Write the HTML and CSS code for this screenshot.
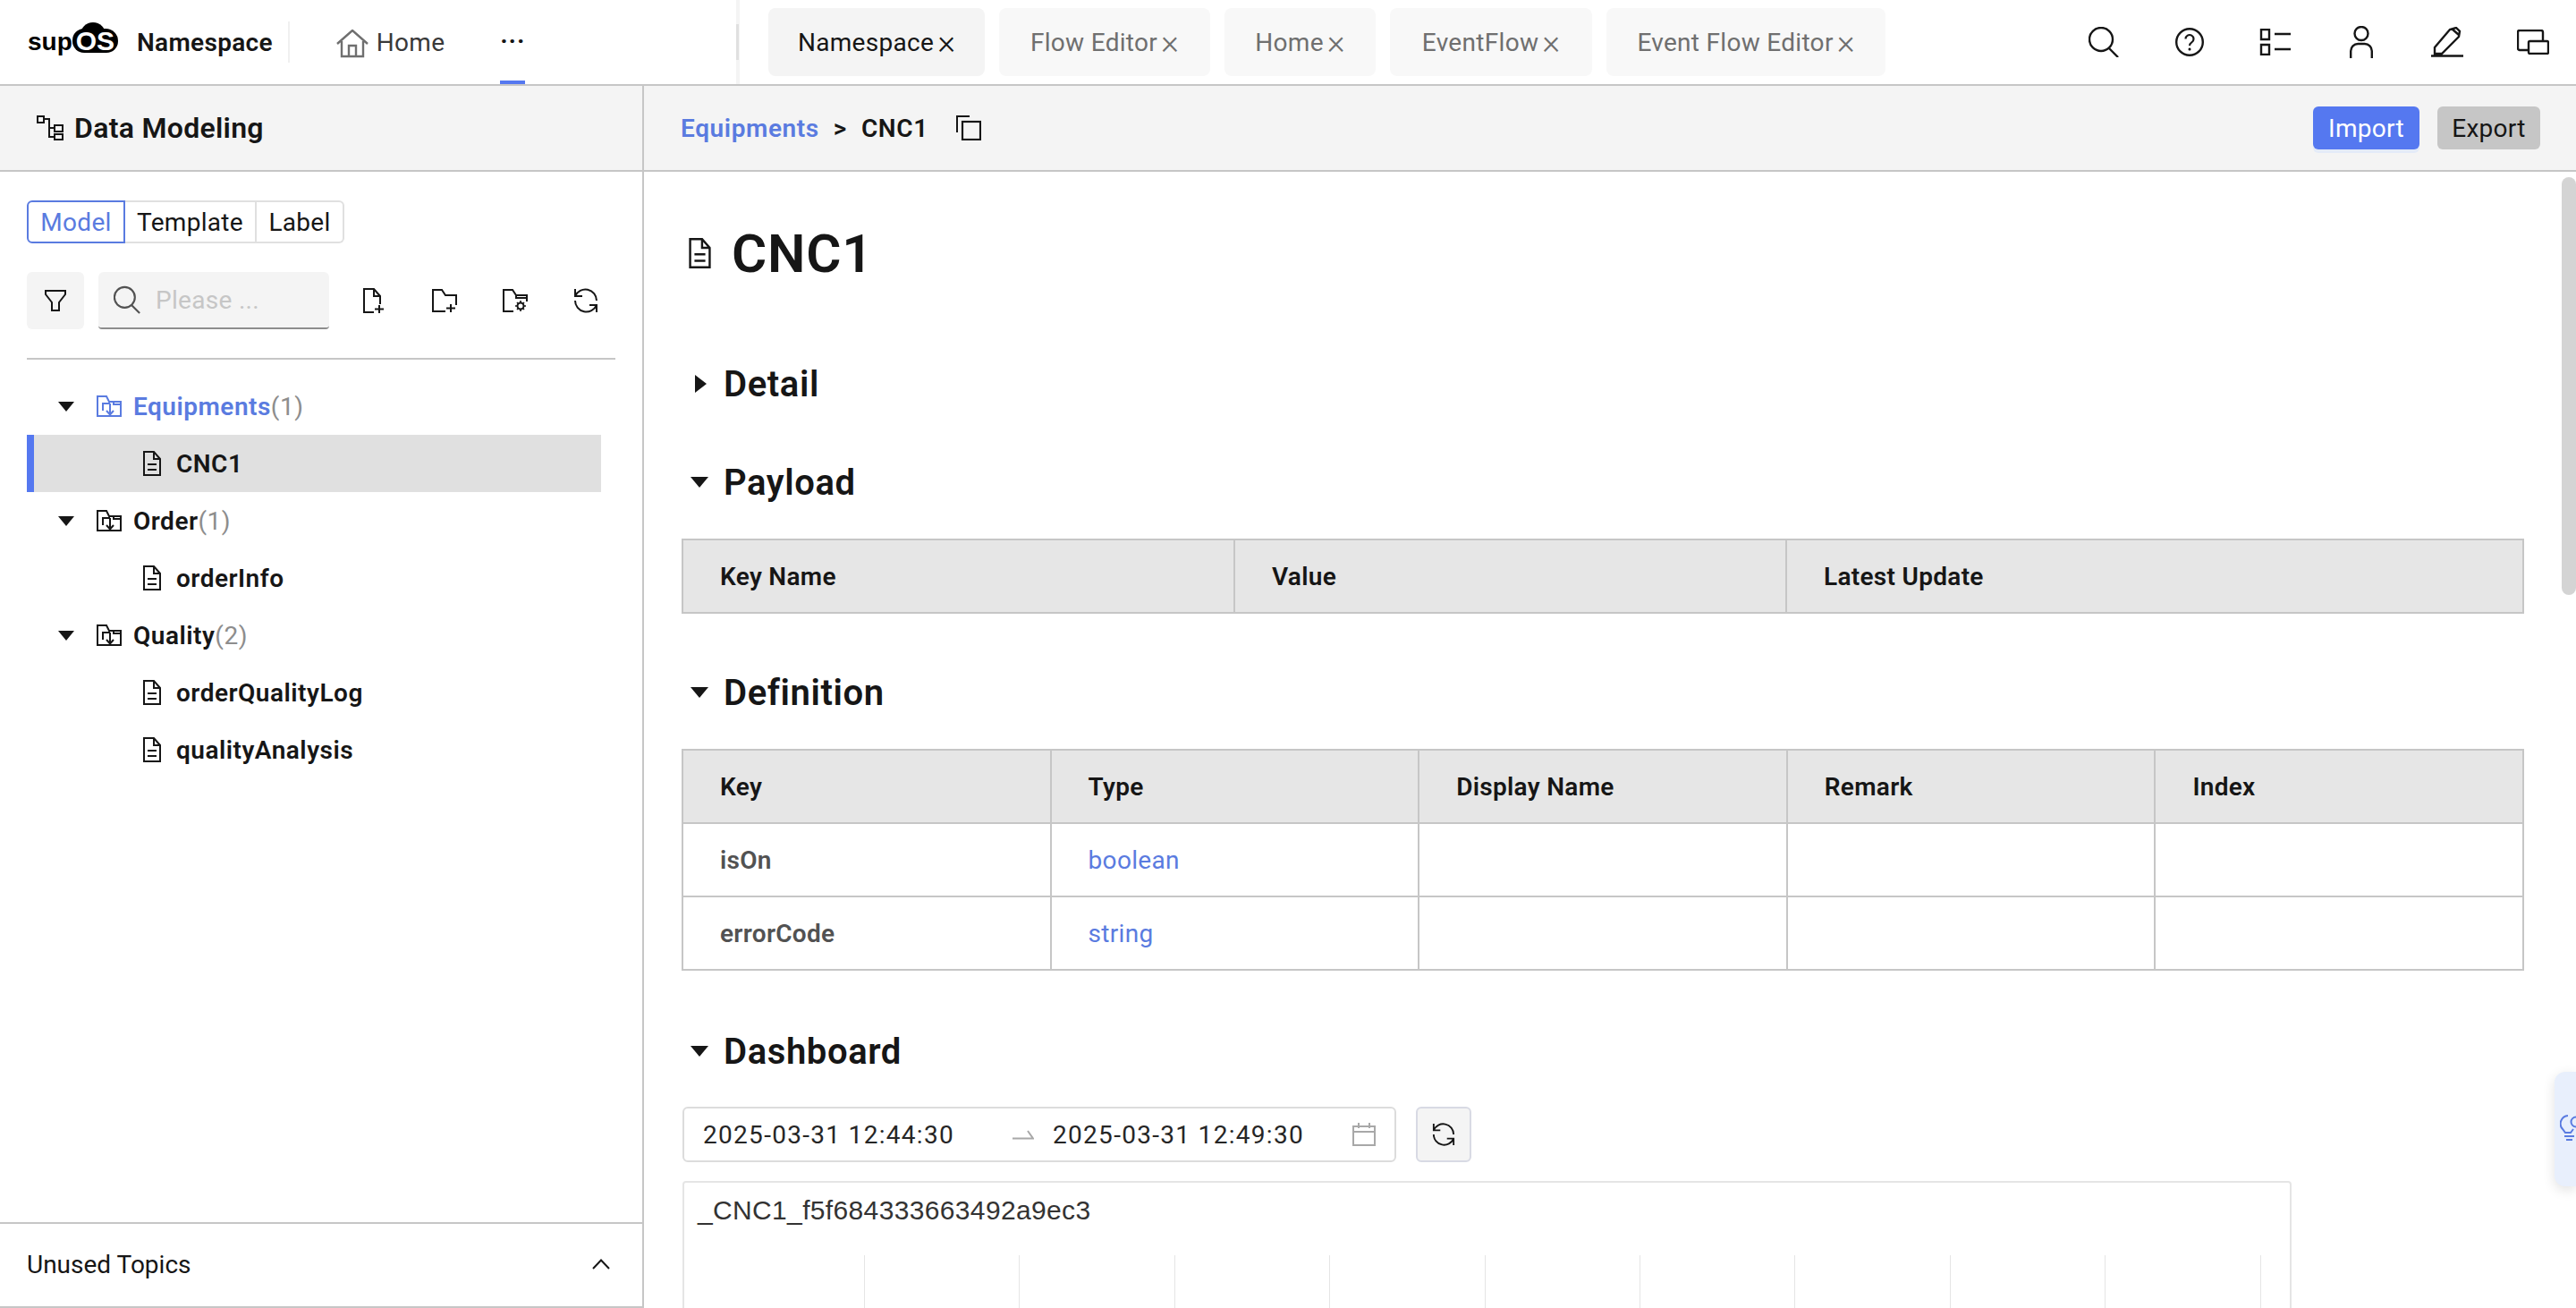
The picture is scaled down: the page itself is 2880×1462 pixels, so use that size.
FILE: index.html
```html
<!DOCTYPE html>
<html lang="en">
<head>
    <meta charset="UTF-8">
    <meta name="viewport" content="width=device-width, initial-scale=1.0">
    <title>Namespace</title>
    <link rel="stylesheet" href="styles.css">
</head>
<body>
    <!-- Shared icons -->
    <svg class="sprite" aria-hidden="true">
        <symbol id="i-file" viewBox="0 0 20 28">
            <path d="M1 1h11l7 8v18H1zM12 1v8h7M5 15h10M5 21h10" fill="none" stroke="currentColor" stroke-width="2"/>
        </symbol>
        <symbol id="i-folder" viewBox="0 0 28 24">
            <path d="M1 23V1h10l3 6h13v16zM19 7v3h8M7 17V9h8M15 9v12M11 17l4 4.500 4-4.500" fill="none" stroke="currentColor" stroke-width="2"/>
        </symbol>
        <symbol id="i-refresh" viewBox="0 0 28 28">
            <path d="M2 1v8h8M2 9A12.500 12.500 0 0 1 26 14M26 27v-8h-8M26 19A12.500 12.500 0 0 1 2 14" fill="none" stroke="currentColor" stroke-width="2"/>
        </symbol>
        <symbol id="i-search" viewBox="0 0 34 34">
            <circle cx="14" cy="14" r="13" fill="none" stroke="currentColor" stroke-width="2.400"/>
            <path d="M23 24l10 10" fill="none" stroke="currentColor" stroke-width="2.400"/>
        </symbol>
    </svg>

    <header class="topbar">
        <div class="topbar-left">
            <span class="logo">sup<span class="logo-os">OS</span></span>
            <span class="app-name">Namespace</span>
            <span class="nav-divider"></span>
            <a class="nav-home">
                <svg class="home-icon" viewBox="0 0 36 32"><path d="M1 16L18 1l17 15M6 13v17h24V13M14 30V18h8v12" fill="none" stroke="#6f6f6f" stroke-width="2.400"/></svg>
                Home
            </a>
            <span class="nav-more">&middot;&middot;&middot;</span>
        </div>
        <div class="tabs">
            <div class="tab active">Namespace <span class="tab-x">&times;</span></div>
            <div class="tab">Flow Editor <span class="tab-x">&times;</span></div>
            <div class="tab">Home <span class="tab-x">&times;</span></div>
            <div class="tab">EventFlow <span class="tab-x">&times;</span></div>
            <div class="tab">Event Flow Editor <span class="tab-x">&times;</span></div>
        </div>
        <div class="topbar-icons">
            <span class="top-icon"><svg width="34" height="34"><use href="#i-search"/></svg></span>
            <span class="top-icon">
                <svg width="32" height="32" viewBox="0 0 32 32"><circle cx="16" cy="16" r="14.800" fill="none" stroke="currentColor" stroke-width="2.400"/><path d="M11.500 12.500a4.500 4.500 0 1 1 6.800 3.900c-1.500.9-2.300 1.800-2.300 3.600" fill="none" stroke="currentColor" stroke-width="2.200"/><circle cx="16" cy="24" r="1.500"/></svg>
            </span>
            <span class="top-icon">
                <svg width="36" height="30" viewBox="0 0 36 30"><path d="M2 1h9v11H2zM2 18h9v11H2zM17 6h18M17 23h18" fill="none" stroke="currentColor" stroke-width="2.400"/></svg>
            </span>
            <span class="top-icon">
                <svg width="26" height="36" viewBox="0 0 26 36"><ellipse cx="13" cy="8.500" rx="7.500" ry="7.500" fill="none" stroke="currentColor" stroke-width="2.400"/><path d="M1.200 36V28a8 8 0 0 1 8-8h7.600a8 8 0 0 1 8 8v8" fill="none" stroke="currentColor" stroke-width="2.400"/></svg>
            </span>
            <span class="top-icon">
                <svg width="36" height="34" viewBox="0 0 36 34"><path d="M4 23L21 3l7-2 4 4-1 6-19 19H4zM23 2l8 7M0 32.500h36" fill="none" stroke="currentColor" stroke-width="2.400"/></svg>
            </span>
            <span class="top-icon">
                <svg width="36" height="28" viewBox="0 0 36 28"><path d="M12 23H3a2 2 0 0 1-2-2V3a2 2 0 0 1 2-2h24a2 2 0 0 1 2 2v9" fill="none" stroke="currentColor" stroke-width="2.400"/><rect x="13" y="13" width="22" height="14" rx="1.500" fill="none" stroke="currentColor" stroke-width="2.400"/></svg>
            </span>
        </div>
    </header>

    <div class="main">
        <!-- Left panel -->
        <aside class="sidebar">
            <div class="sidebar-head">
                <svg class="model-icon" width="30" height="28" viewBox="0 0 30 28"><path d="M1 1h7v7H1zM8 4h6v20h6M14 14h6M20 11h9v7h-9zM20 21h9v6h-9z" fill="none" stroke="currentColor" stroke-width="2"/></svg>
                <span>Data Modeling</span>
            </div>

            <div class="segment">
                <span class="segment-item selected">Model</span>
                <span class="segment-item">Template</span>
                <span class="segment-item">Label</span>
            </div>

            <div class="toolbar">
                <span class="filter-btn">
                    <svg width="24" height="24" viewBox="0 0 24 24"><path d="M1 1h22v4l-7 9v9H8v-9L1 5z" fill="none" stroke="currentColor" stroke-width="2"/></svg>
                </span>
                <div class="search-box">
                    <svg width="30" height="34"><use href="#i-search"/></svg>
                    <span class="placeholder">Please ...</span>
                </div>
                <div class="tool-icons">
                    <span class="tool-icon">
                        <svg width="24" height="28" viewBox="0 0 24 28"><path d="M12 27H1V1h11l7 8v9M12 1v8h7M18 19v9M13 23.500h10" fill="none" stroke="currentColor" stroke-width="2"/></svg>
                    </span>
                    <span class="tool-icon">
                        <svg width="28" height="26" viewBox="0 0 28 26"><path d="M15 25H1V1h10l4 6h12v11M21 17v9M16 21.500h10" fill="none" stroke="currentColor" stroke-width="2"/></svg>
                    </span>
                    <span class="tool-icon">
                        <svg width="28" height="26" viewBox="0 0 28 26"><path d="M12 25H1V1h10l4 6h12v7M15 7v3h12" fill="none" stroke="currentColor" stroke-width="2"/><circle cx="20" cy="19" r="3.500" fill="none" stroke="currentColor" stroke-width="2"/><path d="M20 13v3M20 22v3M14 19h3M23 19h3M16 15l2 2M22 21l2 2M24 15l-2 2M18 21l-2 2" fill="none" stroke="currentColor" stroke-width="1.600"/></svg>
                    </span>
                    <span class="tool-icon"><svg width="28" height="28"><use href="#i-refresh"/></svg></span>
                </div>
            </div>

            <div class="sidebar-rule"></div>

            <ul class="tree">
                <li class="tree-row folder current">
                    <span class="caret-down"></span>
                    <svg class="folder-icon"><use href="#i-folder"/></svg>
                    <span>Equipments</span><span class="count">(1)</span>
                </li>
                <li class="tree-row leaf selected">
                    <svg class="file-icon"><use href="#i-file"/></svg>
                    <span>CNC1</span>
                </li>
                <li class="tree-row folder">
                    <span class="caret-down"></span>
                    <svg class="folder-icon"><use href="#i-folder"/></svg>
                    <span>Order</span><span class="count">(1)</span>
                </li>
                <li class="tree-row leaf">
                    <svg class="file-icon"><use href="#i-file"/></svg>
                    <span>orderInfo</span>
                </li>
                <li class="tree-row folder">
                    <span class="caret-down"></span>
                    <svg class="folder-icon"><use href="#i-folder"/></svg>
                    <span>Quality</span><span class="count">(2)</span>
                </li>
                <li class="tree-row leaf">
                    <svg class="file-icon"><use href="#i-file"/></svg>
                    <span>orderQualityLog</span>
                </li>
                <li class="tree-row leaf">
                    <svg class="file-icon"><use href="#i-file"/></svg>
                    <span>qualityAnalysis</span>
                </li>
            </ul>

            <div class="sidebar-foot">
                <span>Unused Topics</span>
                <svg width="20" height="12" viewBox="0 0 20 12"><path d="M1 11l9-9.500 9 9.500" fill="none" stroke="currentColor" stroke-width="2"/></svg>
            </div>
        </aside>

        <!-- Right panel -->
        <section class="content">
            <div class="content-head">
                <a class="crumb-link">Equipments</a>
                <span class="crumb-sep">&gt;</span>
                <span class="crumb-current">CNC1</span>
                <svg class="copy-icon" width="28" height="28" viewBox="0 0 28 28"><path d="M15 1H1v18" fill="none" stroke="currentColor" stroke-width="2"/><rect x="7" y="7" width="20" height="20" fill="none" stroke="currentColor" stroke-width="2.200"/></svg>
                <div class="head-actions">
                    <button class="btn-import">Import</button>
                    <button class="btn-export">Export</button>
                </div>
            </div>

            <div class="content-body">
                <div class="title-row">
                    <svg class="title-icon"><use href="#i-file"/></svg>
                    <h1>CNC1</h1>
                </div>

                <h2 class="section-head detail-head"><span class="caret-right"></span>Detail</h2>

                <h2 class="section-head payload-head"><span class="caret-big"></span>Payload</h2>
                <table class="data-table payload-table">
                    <thead>
                        <tr><th>Key Name</th><th>Value</th><th>Latest Update</th></tr>
                    </thead>
                </table>

                <h2 class="section-head"><span class="caret-big"></span>Definition</h2>
                <table class="data-table definition-table">
                    <thead>
                        <tr><th>Key</th><th>Type</th><th>Display Name</th><th>Remark</th><th>Index</th></tr>
                    </thead>
                    <tbody>
                        <tr><td class="key">isOn</td><td class="type">boolean</td><td></td><td></td><td></td></tr>
                        <tr><td class="key">errorCode</td><td class="type">string</td><td></td><td></td><td></td></tr>
                    </tbody>
                </table>

                <h2 class="section-head dashboard-head"><span class="caret-big"></span>Dashboard</h2>
                <div class="range-row">
                    <div class="range-input">
                        <span class="range-date">2025-03-31 12:44:30</span>
                        <svg class="range-arrow" width="24" height="12" viewBox="0 0 24 12"><path d="M0 10.500h23L17 2" fill="none" stroke="#a8a8a8" stroke-width="2"/></svg>
                        <span class="range-date">2025-03-31 12:49:30</span>
                        <svg class="calendar-icon" width="26" height="26" viewBox="0 0 26 26"><path d="M1 4h24v21H1zM1 10h24M7 0v6M19 0v6" fill="none" stroke="#a8a8a8" stroke-width="2"/></svg>
                    </div>
                    <span class="range-refresh"><svg width="26" height="26"><use href="#i-refresh"/></svg></span>
                </div>

                <div class="chart-card">
                    <div class="chart-title">_CNC1_f5f684333663492a9ec3</div>
                    <div class="chart-grid">
                        <span></span><span></span><span></span><span></span><span></span>
                        <span></span><span></span><span></span><span></span><span></span>
                    </div>
                </div>
            </div>

            <div class="scroll-thumb"></div>
            <div class="tips-tab">
                <svg width="30" height="30" viewBox="0 0 30 30"><path d="M9 1a9 9 0 0 0-6 15l3 4h6l3-4M5 24h11M7 28h7" fill="none" stroke="#5a7be0" stroke-width="2"/><circle cx="18" cy="8" r="5.500" fill="none" stroke="#5a7be0" stroke-width="2"/></svg>
            </div>
        </section>
    </div>
</body>
</html>
```

FILE: styles.css
```css
* {
    box-sizing: border-box;
}
html, body {
    height: 100%;
}
body {
    margin: 0;
    overflow: hidden;
    display: flex;
    flex-direction: column;
    font-family: 'Roboto', 'Noto Sans', sans-serif;
    font-size: 28px;
    letter-spacing: 0.3px;
    color: #161616;
    background-color: #ffffff;
}
.sprite {
    position: absolute;
    width: 0;
    height: 0;
}

/* Top bar */
.topbar {
    display: flex;
    flex: 0 0 96px;
    border-bottom: 2px solid #c6c6c6;
}
.topbar-left {
    display: flex;
    align-items: center;
    width: 823px;
    padding-left: 31px;
}
.logo {
    font-family: 'Liberation Sans', sans-serif;
    font-weight: 700;
    font-size: 28px;
    letter-spacing: 0;
    color: #000000;
    width: 101px;
    white-space: nowrap;
}
.logo-os {
    position: relative;
    display: inline-block;
    padding: 0 4px;
    font-size: 30px;
    line-height: 27px;
    color: #ffffff;
    background-color: #000000;
    border-radius: 13px 14px 13px 13px;
}
.logo-os::before {
    content: "";
    position: absolute;
    left: 9px;
    top: -7px;
    z-index: -1;
    width: 28px;
    height: 28px;
    background-color: #000000;
    border-radius: 50%;
}
.app-name {
    margin-left: 21px;
    font-weight: 600;
    white-space: nowrap;
}
.nav-divider {
    width: 2px;
    height: 46px;
    margin-left: 17px;
    background-color: #f0f0f0;
}
.nav-home {
    display: flex;
    align-items: center;
    gap: 9px;
    margin-left: 52px;
    color: #393939;
}
.home-icon {
    width: 36px;
    height: 32px;
    margin-top: 4px;
}
.nav-more {
    position: relative;
    align-self: stretch;
    display: flex;
    align-items: center;
    justify-content: center;
    width: 28px;
    margin-left: 62px;
    padding-bottom: 4px;
    font-weight: 700;
    letter-spacing: 1px;
}
.nav-more::after {
    content: "";
    position: absolute;
    left: 0;
    right: 0;
    bottom: 0;
    height: 4px;
    background-color: #5578f0;
}
.tabs {
    position: relative;
    display: flex;
    gap: 16px;
    padding: 9px 0 9px 32px;
    border-left: 4px solid #f4f4f4;
}
.tabs::before {
    content: "";
    position: absolute;
    left: -4px;
    top: 27px;
    width: 3px;
    height: 40px;
    background-color: #e0e0e0;
}
.tab {
    display: flex;
    align-items: center;
    justify-content: center;
    gap: 4px;
    background-color: #f8f8f8;
    border-radius: 8px;
    color: #6f6f6f;
    white-space: nowrap;
}
.tab:nth-child(1) {
    width: 242px;
}
.tab:nth-child(2) {
    width: 236px;
}
.tab:nth-child(3) {
    width: 169px;
}
.tab:nth-child(4) {
    width: 226px;
}
.tab:nth-child(5) {
    width: 312px;
}
.tab.active {
    background-color: #f4f4f4;
    color: #161616;
}
.tab-x {
    font-size: 38px;
    font-weight: 300;
    line-height: 1;
    letter-spacing: 0;
}
.topbar-icons {
    display: flex;
    margin-left: auto;
}
.top-icon {
    display: flex;
    align-items: center;
    justify-content: center;
    width: 96px;
}

/* Layout */
.main {
    display: flex;
    flex: 1;
    min-height: 0;
}
.sidebar {
    display: flex;
    flex-direction: column;
    flex: 0 0 720px;
    border-right: 2px solid #c6c6c6;
}
.sidebar-head {
    display: flex;
    align-items: center;
    gap: 12px;
    flex: 0 0 96px;
    padding-left: 41px;
    background-color: #f4f4f4;
    border-bottom: 2px solid #c6c6c6;
    font-size: 32px;
    font-weight: 600;
}
.segment {
    display: flex;
    align-self: flex-start;
    height: 48px;
    margin: 32px 0 0 30px;
}
.segment-item {
    display: flex;
    align-items: center;
    justify-content: center;
    border: 2px solid #e0e0e0;
    border-left-width: 0;
}
.segment-item:nth-child(1) {
    width: 110px;
}
.segment-item:nth-child(2) {
    width: 147px;
}
.segment-item:nth-child(3) {
    width: 98px;
    border-radius: 0 6px 6px 0;
}
.segment-item.selected {
    border: 2px solid #5a7be0;
    border-radius: 6px 0 0 6px;
    color: #5a7be0;
}
.toolbar {
    display: flex;
    align-items: stretch;
    height: 64px;
    margin: 32px 0 0 30px;
}
.filter-btn {
    display: flex;
    align-items: center;
    justify-content: center;
    width: 64px;
    background-color: #f4f4f4;
    border-radius: 6px;
}
.search-box {
    display: flex;
    align-items: center;
    gap: 17px;
    width: 258px;
    margin-left: 16px;
    padding-left: 17px;
    background-color: #f4f4f4;
    border-bottom: 2px solid #8d8d8d;
    border-radius: 6px 6px 4px 4px;
    color: #525252;
}
.placeholder {
    color: #c6c6c6;
}
.tool-icons {
    display: flex;
    margin-left: 10px;
}
.tool-icon {
    display: flex;
    align-items: center;
    justify-content: center;
    width: 79px;
}
.sidebar-rule {
    height: 2px;
    margin: 32px 30px 0;
    background-color: #c6c6c6;
}
.tree {
    list-style: none;
    margin: 20px 0 0 30px;
    padding: 0;
    width: 642px;
    font-weight: 600;
    letter-spacing: 0.5px;
}
.tree-row {
    display: flex;
    align-items: center;
    height: 64px;
}
.tree-row.folder {
    padding-left: 35px;
}
.tree-row.leaf {
    padding-left: 130px;
}
.tree-row.selected {
    padding-left: 122px;
    background-color: #e0e0e0;
    border-left: 8px solid #5578f0;
}
.tree-row.current {
    color: #5a7be0;
}
.caret-down {
    width: 0;
    height: 0;
    margin-right: 25px;
    border-left: 9px solid transparent;
    border-right: 9px solid transparent;
    border-top: 11px solid #161616;
}
.folder-icon {
    width: 28px;
    height: 24px;
    margin-right: 13px;
}
.file-icon {
    width: 20px;
    height: 28px;
    margin-right: 17px;
}
.count {
    font-weight: 400;
    color: #8d8d8d;
}
.sidebar-foot {
    display: flex;
    align-items: center;
    justify-content: space-between;
    flex: 0 0 96px;
    margin-top: auto;
    padding: 0 36px 2px 30px;
    border-top: 2px solid #c6c6c6;
    border-bottom: 2px solid #c6c6c6;
    letter-spacing: 0;
}

/* Content */
.content {
    position: relative;
    display: flex;
    flex-direction: column;
    flex: 1;
    min-width: 0;
    overflow: hidden;
}
.content-head {
    display: flex;
    align-items: center;
    flex: 0 0 96px;
    padding: 0 40px 0 41px;
    background-color: #f4f4f4;
    border-bottom: 2px solid #c6c6c6;
    font-weight: 600;
    letter-spacing: 0.6px;
}
.crumb-link {
    color: #5a7be0;
}
.crumb-sep {
    margin: 0 16px;
}
.copy-icon {
    margin-left: 31px;
}
.head-actions {
    display: flex;
    gap: 20px;
    margin-left: auto;
}
.head-actions button {
    height: 48px;
    border: none;
    border-radius: 6px;
    font-family: inherit;
    font-size: 28px;
    letter-spacing: 0.3px;
}
.btn-import {
    width: 119px;
    background-color: #5578f0;
    color: #ffffff;
    box-shadow: 0 4px 0 #e4ebf8;
}
.btn-export {
    width: 115px;
    background-color: #c6c6c6;
    color: #161616;
}
.content-body {
    padding: 51px 58px 0 42px;
}
.title-row {
    display: flex;
    align-items: center;
    gap: 23px;
    height: 80px;
    padding-left: 8px;
}
.title-icon {
    width: 25px;
    height: 34px;
}
h1 {
    margin: 0;
    font-size: 60px;
    font-weight: 600;
    letter-spacing: 0.8px;
}
.section-head {
    display: flex;
    align-items: center;
    height: 60px;
    margin: 57px 0 0;
    padding: 2px 0 0 10px;
    font-size: 40px;
    font-weight: 600;
    letter-spacing: 0.6px;
}
.detail-head {
    margin-top: 75px;
}
.payload-head {
    margin-top: 50px;
}
.dashboard-head {
    margin-top: 59px;
}
.caret-right {
    width: 0;
    height: 0;
    margin: 0 19px 0 5px;
    border-top: 10px solid transparent;
    border-bottom: 10px solid transparent;
    border-left: 13px solid #161616;
}
.caret-big {
    width: 0;
    height: 0;
    margin-right: 17px;
    border-left: 10px solid transparent;
    border-right: 10px solid transparent;
    border-top: 12px solid #161616;
}
.data-table {
    width: 2060px;
    margin-top: 34px;
    border-collapse: collapse;
    table-layout: fixed;
}
.data-table th,
.data-table td {
    height: 82px;
    padding: 0 0 0 41px;
    border: 2px solid #c6c6c6;
    text-align: left;
}
.data-table th {
    background-color: #e6e6e6;
    font-weight: 600;
}
.payload-table th:nth-child(1),
.payload-table th:nth-child(2) {
    width: 617px;
}
.definition-table th {
    width: 20%;
}
.data-table .key {
    font-weight: 600;
    color: #525252;
}
.data-table .type {
    color: #5a7be0;
}
.range-row {
    display: flex;
    gap: 22px;
    margin: 33px 0 0 1px;
}
.range-input {
    display: flex;
    align-items: center;
    width: 798px;
    height: 62px;
    padding-left: 21px;
    border: 2px solid #dcdcdc;
    border-radius: 6px;
    color: #262626;
}
.range-date {
    width: 280px;
    letter-spacing: 1.300px;
    white-space: nowrap;
}
.range-arrow {
    margin: 0 21px 0 66px;
}
.calendar-icon {
    margin-left: 55px;
}
.range-refresh {
    display: flex;
    align-items: center;
    justify-content: center;
    width: 62px;
    height: 62px;
    background-color: #f4f4f4;
    border: 2px solid #d8dae4;
    border-radius: 6px;
}
.chart-card {
    width: 1799px;
    height: 300px;
    margin: 21px 0 0 1px;
    border: 2px solid #e5e5e5;
    border-radius: 4px 4px 0 0;
}
.chart-title {
    height: 81px;
    padding: 13px 0 0 15px;
    font-family: 'Liberation Sans', sans-serif;
    font-size: 30px;
    line-height: 36px;
    letter-spacing: 0.350px;
    color: #333333;
}
.chart-grid {
    display: flex;
    height: 100%;
    margin-left: 201px;
}
.chart-grid span {
    flex: 0 0 173.400px;
    border-left: 1px solid #e5e5e5;
}
.scroll-thumb {
    position: absolute;
    top: 102px;
    right: 0;
    width: 16px;
    height: 467px;
    background-color: #d4d4d4;
    border-radius: 8px;
}
.tips-tab {
    position: absolute;
    top: 1102px;
    right: 0;
    width: 24px;
    height: 128px;
    padding: 48px 0 0 6px;
    overflow: hidden;
    background-color: #e8effc;
    border-radius: 12px 0 0 12px;
    box-shadow: 0 4px 14px rgba(0, 0, 0, 0.12);
}
```
